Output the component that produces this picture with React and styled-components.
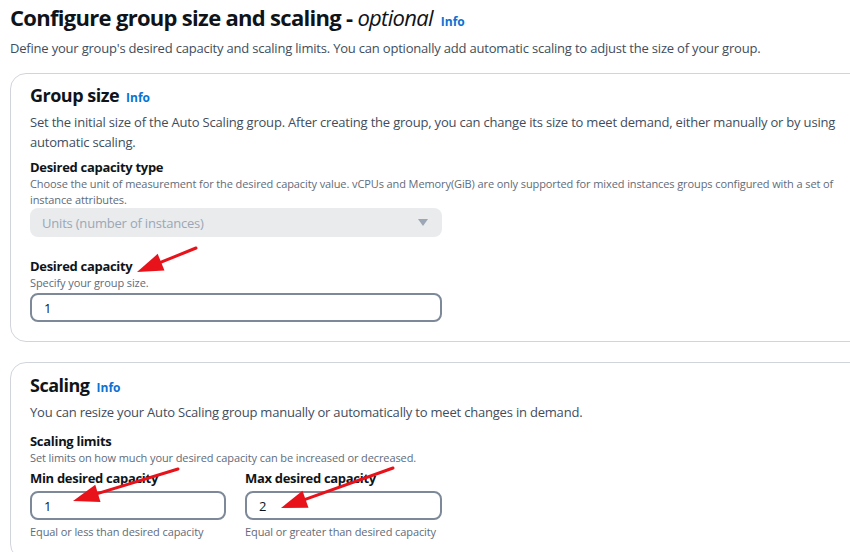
import React from "react";
import styled, { createGlobalStyle } from "styled-components";

const GlobalStyle = createGlobalStyle`
  html, body {
    margin: 0;
    padding: 0;
    background: #fff;
  }
  body {
    font-family: "Open Sans", "Liberation Sans", sans-serif;
    color: #0f141a;
  }
`;

const Page = styled.div`
  position: relative;
  width: 850px;
  height: 552px;
  overflow: hidden;
  padding-left: 10px;
  box-sizing: border-box;
`;

const Title = styled.h1`
  margin: 0;
  padding-top: 1px;
  font-size: 22px;
  line-height: 32px;
  font-weight: 700;
  letter-spacing: -0.7px;
  em {
    font-weight: 400;
  }
`;

const Info = styled.span`
  color: #0972d3;
  font-size: 12px;
  font-weight: 700;
  margin-left: ${(p) => p.$gap ?? 8}px;
  letter-spacing: 0;
`;

const Lead = styled.p`
  margin: 0;
  font-size: 13px;
  line-height: 20px;
  color: #414d5c;
  letter-spacing: -0.2px;
`;

const Card = styled.section`
  margin-top: ${(p) => p.$gap}px;
  width: 880px;
  box-sizing: border-box;
  border: 1px solid #d1d5db;
  border-radius: 16px;
  padding: ${(p) => p.$padTop ?? 7}px 20px 19px 19px;
`;

const CardTitle = styled.h2`
  margin: 0;
  font-size: 18px;
  line-height: 28px;
  font-weight: 700;
  letter-spacing: -0.5px;
`;

const CardText = styled.p`
  margin: 0;
  width: 832px;
  font-size: 13px;
  line-height: 20px;
  color: #414d5c;
  letter-spacing: -0.2px;
`;

const Field = styled.div`
  margin-top: ${(p) => p.$top ?? 14}px;
  width: ${(p) => p.$width || 412}px;
`;

const Label = styled.div`
  font-size: 13px;
  line-height: 18px;
  font-weight: 700;
  letter-spacing: -0.3px;
`;

const Hint = styled.div`
  margin-top: ${(p) => p.$top ?? 0}px;
  font-size: 11px;
  line-height: 16px;
  color: #5f6b7a;
  letter-spacing: -0.1px;
  width: ${(p) => p.$width || "auto"};
`;

const Select = styled.div`
  margin-top: 0;
  height: 29px;
  border-radius: 8px;
  background: #e9ebed;
  display: flex;
  align-items: center;
  justify-content: space-between;
  padding: 0 14px 0 12px;
  font-size: 13px;
  letter-spacing: -0.2px;
  color: #9ba7b6;
`;

const Caret = styled.span`
  width: 0;
  height: 0;
  border-left: 5px solid transparent;
  border-right: 5px solid transparent;
  border-top: 7px solid #9ba7b6;
`;

const Input = styled.div`
  margin-top: ${(p) => p.$top ?? 4}px;
  height: 29px;
  box-sizing: border-box;
  border: 2px solid #7d8998;
  border-radius: 8px;
  display: flex;
  align-items: center;
  padding-left: 12px;
  font-size: 13px;
  color: #0f141a;
`;

const Row = styled.div`
  display: flex;
  gap: 19px;
  margin-top: 3px;
`;

const Arrows = styled.svg`
  position: absolute;
  left: 0;
  top: 0;
  pointer-events: none;
`;

const Arrow = ({ x1, y1, x2, y2 }) => {
  const a = Math.atan2(y2 - y1, x2 - x1);
  const len = 26;
  const w = 9;
  const bx = x2 - Math.cos(a) * len;
  const by = y2 - Math.sin(a) * len;
  const px = -Math.sin(a) * w;
  const py = Math.cos(a) * w;
  return (
    <g fill="#e8121b" stroke="#e8121b">
      <line
        x1={x1}
        y1={y1}
        x2={bx + Math.cos(a) * 4}
        y2={by + Math.sin(a) * 4}
        strokeWidth="3"
        strokeLinecap="round"
      />
      <polygon
        points={`${x2},${y2} ${bx + px},${by + py} ${bx - px},${by - py}`}
        stroke="none"
      />
    </g>
  );
};

export default function App() {
  return (
    <Page>
      <GlobalStyle />
      <Title>
        Configure group size and scaling - <em>optional</em>
        <Info>Info</Info>
      </Title>
      <Lead>
        Define your group's desired capacity and scaling limits. You can optionally add
        automatic scaling to adjust the size of your group.
      </Lead>

      <Card $gap={15}>
        <CardTitle>
          Group size<Info $gap={7}>Info</Info>
        </CardTitle>
        <CardText>
          Set the initial size of the Auto Scaling group. After creating the group, you can
          change its size to meet demand, either manually or by using automatic scaling.
        </CardText>
        <Field $top={6} $width={412}>
          <Label>Desired capacity type</Label>
          <Hint $width="830px">
            Choose the unit of measurement for the desired capacity value. vCPUs and
            Memory(GiB) are only supported for mixed instances groups configured with a set of
            instance attributes.
          </Hint>
          <Select>
            Units (number of instances)
            <Caret />
          </Select>
        </Field>
        <Field $top={20}>
          <Label>Desired capacity</Label>
          <Hint>Specify your group size.</Hint>
          <Input $top={2}>1</Input>
        </Field>
      </Card>

      <Card $gap={20} $padTop={8}>
        <CardTitle>
          Scaling<Info $gap={7}>Info</Info>
        </CardTitle>
        <CardText>
          You can resize your Auto Scaling group manually or automatically to meet changes in
          demand.
        </CardText>
        <Field $top={10} $width={812}>
          <Label>Scaling limits</Label>
          <Hint>Set limits on how much your desired capacity can be increased or decreased.</Hint>
          <Row>
            <Field $top={0} $width={196}>
              <Label>Min desired capacity</Label>
              <Input>1</Input>
              <Hint $top={4}>Equal or less than desired capacity</Hint>
            </Field>
            <Field $top={0} $width={197}>
              <Label>Max desired capacity</Label>
              <Input>2</Input>
              <Hint $top={4}>Equal or greater than desired capacity</Hint>
            </Field>
          </Row>
        </Field>
      </Card>

      <Arrows width="850" height="552" viewBox="0 0 850 552">
        <Arrow x1={196} y1={248} x2={137} y2={272} />
        <Arrow x1={178} y1={469} x2={73} y2={501} />
        <Arrow x1={393} y1={468} x2={281} y2={508} />
      </Arrows>
    </Page>
  );
}
